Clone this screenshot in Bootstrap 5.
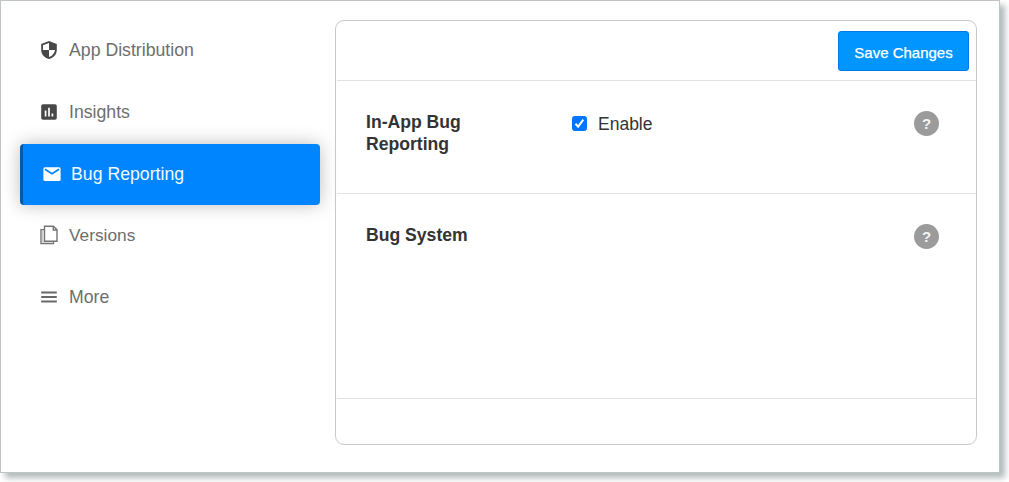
<!DOCTYPE html>
<html lang="en">
<head>
<meta charset="utf-8">
<meta name="viewport" content="width=device-width, initial-scale=1">
<title>Bug Reporting</title>
<link href="https://cdn.jsdelivr.net/npm/bootstrap@5.3.0/dist/css/bootstrap.min.css" rel="stylesheet">
<style>
body{font-family:"Liberation Sans",Arial,sans-serif;background:#fff;min-height:100vh}
.frame{width:1000px;height:473px;border:1px solid #bfc5c5;background:#fff;box-shadow:5px 5px 6px #b3bbbb;padding:19px 22px 27px 19px;gap:15px}
.side{width:300px;flex:none}
.side .nav-link{height:62px;padding:0 0 2px 20px;color:#6e6e6e;font-size:17.7px;line-height:22px;border-radius:4px}
.side .nav-link svg{width:18px;height:20px;margin-right:11px;flex:none}
.side .nav-link.active{height:61px;padding-bottom:1px;background:#0085ff;color:#f2f9ff;border-left:3px solid #0059ad;box-shadow:0 0 18px rgba(0,0,0,.26)}
.side .nav-link.active svg{margin-right:10px}
.side .nav-link.active~.nav-link{padding-bottom:2px}
.side .versions{font-size:17.3px!important}
.panel{border:1px solid #c8c8c8;border-radius:9px;color:#333;height:425px}
.panel>div{border-bottom:1px solid #e1e2e3;margin-left:1px}
.panel>div:last-child{border:0}
.top-row{height:60px;padding:10px 7px 0 0}
.save{width:131px;height:40px;background:#0095ff;border:1px solid #0079e8;border-radius:3px;color:#fff;font-size:15px;padding:3px 0 0;line-height:22px;-webkit-text-stroke:.25px #fff}
.setting{padding:30px 37px 0 29px}
.setting h2{width:206px;font-size:17.6px;line-height:22px;font-weight:700;margin:0}
.form-check-input.tick{width:15px;height:15px;margin:0 11px 0 0;border-radius:2.5px;border-color:#0075ff;background-color:#0075ff;background-image:url("data:image/svg+xml,%3Csvg xmlns='http://www.w3.org/2000/svg' viewBox='0 0 13 13'%3E%3Cpath d='m2.5 6.8 2.7 2.8L10.3 2.7' fill='none' stroke='white' stroke-width='2'/%3E%3C/svg%3E")!important}
.enable{height:25px;font-size:17.5px}
.enable span{padding-top:2px}
.help{width:25px;height:25px;background:#9b9b9b;color:#f4f4f4;font-size:15px;font-weight:700;line-height:26px}
</style>
</head>
<body>
<main class="frame d-flex">
<nav class="side nav flex-column flex-nowrap">
<a class="nav-link d-flex align-items-center" href="#"><svg viewBox="0 0 18 20"><path d="M9 1 1.2 4v6c0 4.4 3.2 7.8 7.8 9 4.6-1.2 7.8-4.6 7.8-9V4z" fill="#484848"/><path d="M9 3v7H3V5.3zM9 10h6c-.4 3.4-2.5 5.8-6 7z" fill="#fff"/></svg><span>App Distribution</span></a>
<a class="nav-link d-flex align-items-center" href="#"><svg viewBox="0 0 18 20"><rect x="1.2" y="2.2" width="15.6" height="15.6" rx="1.8" fill="#484848"/><path d="M5.6 8.4v6M9 5.8v8.6M12.4 11.4v3" stroke="#fff" stroke-width="1.7"/></svg><span>Insights</span></a>
<a class="nav-link active d-flex align-items-center" href="#" aria-current="page"><svg viewBox="0 0 18 20"><rect x=".4" y="3.2" width="17.2" height="13.8" rx="1.6" fill="#fff"/><path d="m2 5.3 7 4.5 7-4.5" fill="none" stroke="#0085ff" stroke-width="1.7"/></svg><span>Bug Reporting</span></a>
<a class="nav-link versions d-flex align-items-center" href="#"><svg viewBox="0 0 18 20" fill="none" stroke="#747474" stroke-width="1.4"><path d="M4.5 4.6H1v14h12.5v-2.4"/><path d="M2.6 5v12h10" stroke="#d0d0d0"/><path d="M4.5 1.2h9L17 4.7v11.5H4.5zM13.3 1.4V5H17"/></svg><span>Versions</span></a>
<a class="nav-link d-flex align-items-center" href="#"><svg viewBox="0 0 18 20"><path d="M1.2 5.5h15.6M1.2 10h15.6M1.2 14.5h15.6" stroke="#686868" stroke-width="2"/></svg><span>More</span></a>
</nav>
<section class="panel flex-grow-1 d-flex flex-column">
<div class="top-row d-flex justify-content-end align-items-start"><button class="btn save" type="button">Save Changes</button></div>
<div class="setting d-flex align-items-start" style="height:113px"><h2>In-App Bug<br>Reporting</h2><label class="enable d-flex align-items-center"><input class="form-check-input tick" type="checkbox" checked><span>Enable</span></label><span class="help rounded-circle text-center ms-auto">?</span></div>
<div class="setting d-flex align-items-start" style="height:205px"><h2>Bug System</h2><span class="help rounded-circle text-center ms-auto">?</span></div>
<div class="flex-grow-1"></div>
</section>
</main>
<script src="https://cdn.jsdelivr.net/npm/bootstrap@5.3.0/dist/js/bootstrap.bundle.min.js"></script>
</body>
</html>
